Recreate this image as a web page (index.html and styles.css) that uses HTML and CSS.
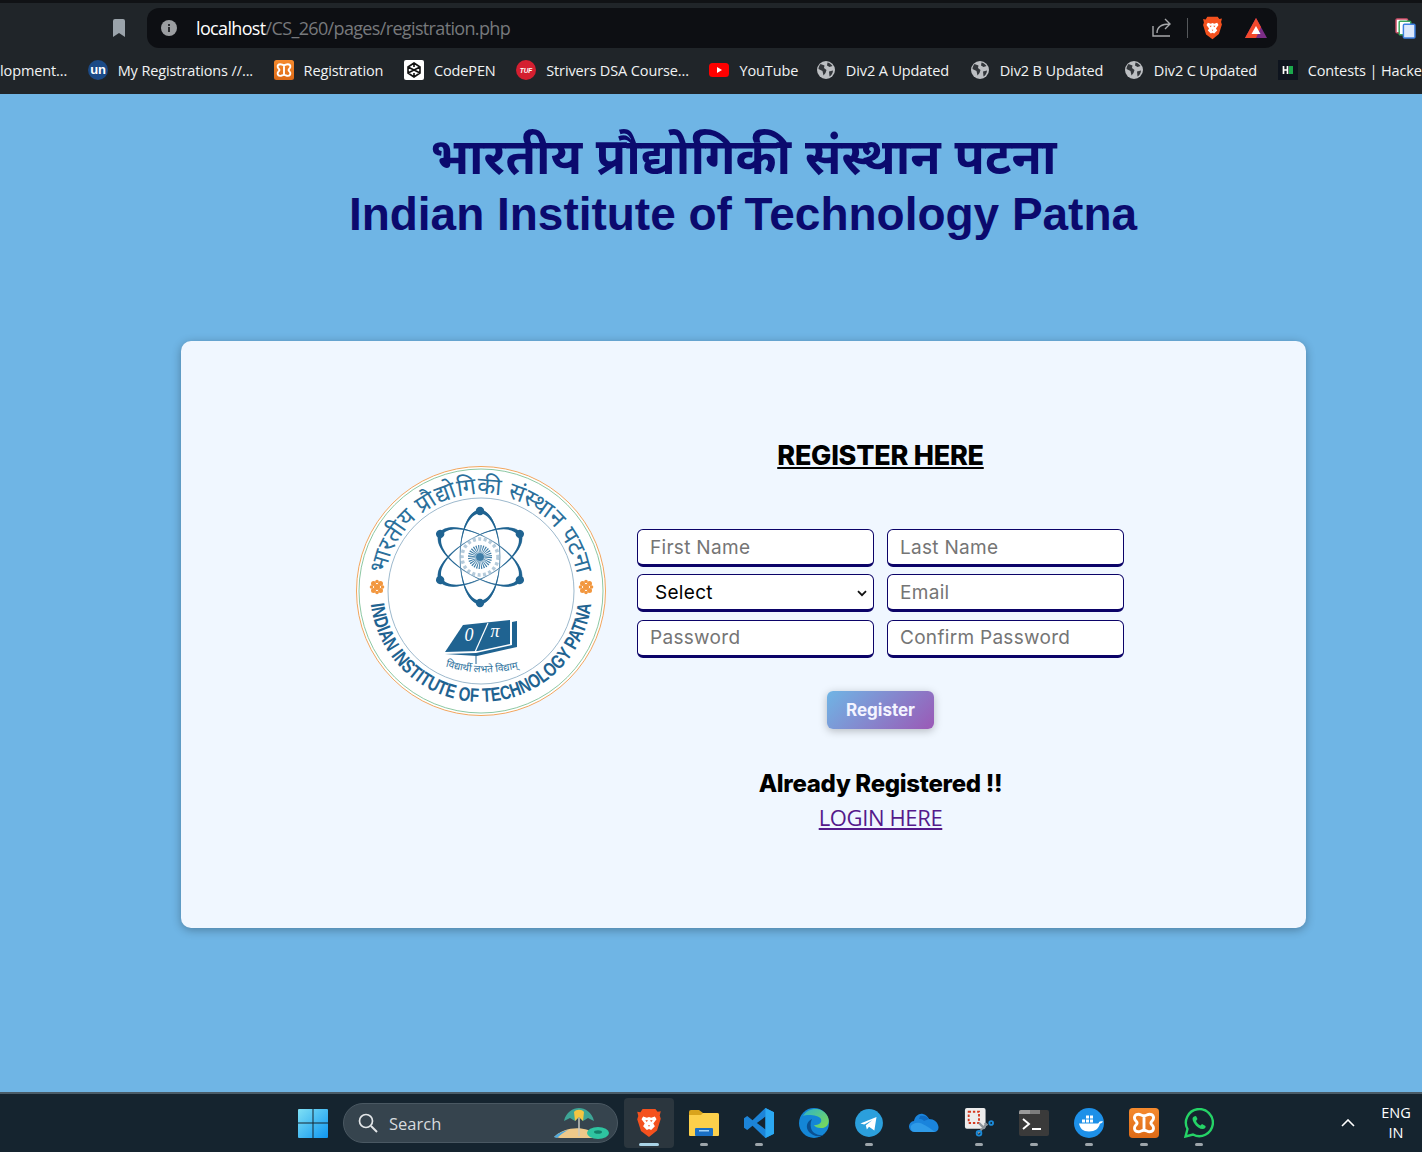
FILE: index.html
```html
<!DOCTYPE html>
<html lang="en">
<head>
<meta charset="utf-8">
<title>Registration</title>
<link rel="stylesheet" href="styles.css">
</head>
<body>
<svg class="defs" width="0" height="0" aria-hidden="true">
  <defs>
    <symbol id="globe" viewBox="0 0 20 20">
      <circle cx="10" cy="10" r="9" fill="#bcbfc2"/>
      <path d="M4.500 4 8.500 5.500 8 8 10.500 10 9.500 13 7.500 15.500 6.500 11 2.500 9C2.500 7 3.500 5 4.500 4ZM11.500 2.500C14 3 15.500 4.500 16.500 6L13.500 7 11 5.500ZM13 11.500 17 10.500C17 13 15.500 15.500 13.500 16.500Z" fill="#33373b"/>
    </symbol>
    <symbol id="xampp" viewBox="0 0 24 24">
      <defs><linearGradient id="xg" x1="0" y1="0" x2="0" y2="1"><stop offset="0" stop-color="#f58a2e"/><stop offset="1" stop-color="#dd6a16"/></linearGradient></defs>
      <rect width="24" height="24" rx="3" fill="url(#xg)"/>
      <path d="M7.500 5c2 0 2.500 1.200 4.500 1.200S14.500 5 16.500 5c2.500 0 3.500 1.800 3 3.700-.4 1.500-2 2-2 3.300s1.600 1.800 2 3.300c.5 1.900-.5 3.700-3 3.700-2 0-2.500-1.200-4.500-1.200S9.500 19 7.500 19c-2.500 0-3.500-1.800-3-3.700.4-1.500 2-2 2-3.300s-1.600-1.800-2-3.300C4 6.800 5 5 7.500 5ZM12 7v10" fill="none" stroke="#fff" stroke-width="2.300"/>
    </symbol>
    <symbol id="brave" viewBox="0 0 24 28">
      <path d="M6 1h12l2 2.500 3-.5-1 4 1 3-3.500 11L12 27l-7.500-5.500L1 10.500l1-3-1-4 3 .5Z" fill="#f4511e"/>
      <path d="M6.500 8 10 9l2-.7 2 .7 3.500-1 1.500 2.500-3 4 1.500 2.500-3.500 3.500-2-1-2 1-3.500-3.500 1.500-2.500-3-4Z" fill="#fff"/>
      <path d="M8.500 11.500h2.500l-1 1.500ZM15.500 11.500H13l1 1.500ZM11 16h2l-1 1.500Z" fill="#f4511e"/>
    </symbol>
  </defs>
</svg>

<header class="browser">
  <div class="toolbar">
    <svg class="bookmark-icon" viewBox="0 0 14 18"><path d="M1 2a2 2 0 0 1 2-2h8a2 2 0 0 1 2 2v16l-6-4-6 4Z" fill="#9aa3aa"/></svg>
    <div class="omnibox">
      <svg class="info-icon" viewBox="0 0 16 16"><circle cx="8" cy="8" r="8" fill="#9b9ea1"/><rect x="7" y="7" width="2" height="5" fill="#2a2c2f"/><rect x="7" y="4" width="2" height="2" fill="#2a2c2f"/></svg>
      <span class="url"><span class="url-host">localhost</span>/CS_260/pages/registration.php</span>
      <svg class="share-icon" viewBox="0 0 20 20"><path d="M1 8v10h17M5 15c0-6 4-9 13-9M13 1l5 5-5 5" fill="none" stroke="#a6a8ab" stroke-width="1.400"/></svg>
      <span class="omni-sep"></span>
      <svg class="brave-small" viewBox="0 0 24 28"><use href="#brave"/></svg>
      <svg class="bat-icon" viewBox="0 0 22 20"><path d="M11 0 22 20H0Z" fill="#7b2d86"/><path d="M11 0 16 9 11 20H0Z" fill="#f4492c"/><path d="M11 8l4.500 8h-9Z" fill="#fff"/></svg>
    </div>
    <svg class="tabs-icon" viewBox="0 0 20 20"><rect x="1" y="1" width="11" height="13" rx="1" fill="#fff" stroke="#d1506b" stroke-width="1.400"/><rect x="4" y="3" width="11" height="13" rx="1" fill="#fff" stroke="#3aa65c" stroke-width="1.400"/><rect x="8" y="6" width="11" height="13" rx="1" fill="#dce8fb" stroke="#3d7fe0" stroke-width="1.400"/></svg>
  </div>
  <nav class="bookmarks">
    <a class="bm bm-first"><span>lopment...</span></a>
    <a class="bm"><svg class="bm-ico" viewBox="0 0 20 20"><circle cx="10" cy="10" r="10" fill="#1b4a86"/><text x="10" y="14" class="un-text">un</text></svg><span>My Registrations //...</span></a>
    <a class="bm"><svg class="bm-ico" viewBox="0 0 24 24"><use href="#xampp"/></svg><span>Registration</span></a>
    <a class="bm"><svg class="bm-ico" viewBox="0 0 20 20"><rect width="20" height="20" rx="2" fill="#fff"/><path d="M10 3 16 7v6l-6 4-6-4V7ZM10 3v4M10 13v4M4 7l6 3 6-3M4 13l6-3 6 3" fill="none" stroke="#111" stroke-width="1.600"/></svg><span>CodePEN</span></a>
    <a class="bm"><svg class="bm-ico" viewBox="0 0 20 20"><circle cx="10" cy="10" r="10" fill="#d41f30"/><text x="10" y="12.500" class="tuf-text">TUF</text></svg><span>Strivers DSA Course...</span></a>
    <a class="bm bm-tight"><svg class="bm-ico" viewBox="0 0 20 20"><rect y="3" width="20" height="14" rx="3.500" fill="#f00"/><path d="M8 7l5 3-5 3Z" fill="#fff"/></svg><span>YouTube</span></a>
    <a class="bm"><svg class="bm-ico" viewBox="0 0 20 20"><use href="#globe"/></svg><span>Div2 A Updated</span></a>
    <a class="bm"><svg class="bm-ico" viewBox="0 0 20 20"><use href="#globe"/></svg><span>Div2 B Updated</span></a>
    <a class="bm"><svg class="bm-ico" viewBox="0 0 20 20"><use href="#globe"/></svg><span>Div2 C Updated</span></a>
    <a class="bm"><svg class="bm-ico" viewBox="0 0 20 20"><rect width="20" height="20" fill="#0e141e"/><path d="M5.500 6v8M9.500 6v8M5.500 10h4" stroke="#fff" stroke-width="1.700"/><rect x="11" y="6" width="4" height="8" fill="#1ba94c"/></svg><span>Contests | HackerRank</span></a>
  </nav>
</header>

<main class="page">
  <div class="titles">
    <h1 class="title-hi" lang="hi">भारतीय प्रौद्योगिकी संस्थान पटना</h1>
    <h1 class="title-en">Indian Institute of Technology Patna</h1>
  </div>

  <section class="card">
    <svg class="logo" viewBox="0 0 250 250" role="img" aria-label="IIT Patna logo">
      <defs>
        <path id="arc-top" d="M28 125a97 97 0 0 1 194 0"/>
        <path id="arc-bot" d="M14 125a111 111 0 0 0 222 0"/>
        <path id="arc-motto" d="M85 199Q125 213 167 201"/>
        <g id="orbit">
          <ellipse cx="124" cy="91" rx="20" ry="47" fill="none" stroke="#7fa5c0" stroke-width="1"/>
          <path d="M104 91C104 62 113 44 124 44S144 62 144 91C143 64 134 47.500 124 47.500S105 64 104 91Z" fill="#1f6391"/>
          <path d="M104 91C104 120 113 138 124 138S144 120 144 91C143 118 134 134.500 124 134.500S105 118 104 91Z" fill="#1f6391"/>
          <circle cx="124" cy="45" r="4.200" fill="#1f6391"/>
          <circle cx="124" cy="137" r="4.200" fill="#1f6391"/>
        </g>
        <g id="knot">
          <circle cx="-3.500" cy="-3.500" r="2.500"/><circle cx="3.500" cy="-3.500" r="2.500"/><circle cx="-3.500" cy="3.500" r="2.500"/><circle cx="3.500" cy="3.500" r="2.500"/><circle cx="0" cy="0" r="3"/><circle cx="0" cy="-5.500" r="1.800"/><circle cx="0" cy="5.500" r="1.800"/><circle cx="-5.500" cy="0" r="1.800"/><circle cx="5.500" cy="0" r="1.800"/>
        </g>
      </defs>
      <circle cx="125" cy="125" r="124.500" fill="#fff" stroke="#f2a65e" stroke-width="1"/>
      <circle cx="125" cy="125" r="122" fill="none" stroke="#6fb98c" stroke-width=".8"/>
      <circle cx="125" cy="125" r="93" fill="none" stroke="#9db9cd" stroke-width="1"/>
      <text class="logo-hi" lang="hi"><textPath href="#arc-top" startOffset="50%">भारतीय प्रौद्योगिकी संस्थान पटना</textPath></text>
      <text class="logo-en"><textPath href="#arc-bot" startOffset="50%" textLength="322" lengthAdjust="spacingAndGlyphs">INDIAN INSTITUTE OF TECHNOLOGY PATNA</textPath></text>
      <use href="#knot" x="21" y="121" fill="#f2973f"/>
      <use href="#knot" x="230" y="121" fill="#f2973f"/>
      <circle cx="124" cy="91" r="18" fill="none" stroke="#b5cbdb" stroke-width="3.500" stroke-dasharray="3 2.500"/>
      <use href="#orbit"/>
      <use href="#orbit" transform="rotate(60 124 91)"/>
      <use href="#orbit" transform="rotate(-60 124 91)"/>
      <circle cx="124" cy="91" r="8" fill="none" stroke="#3f7ea8" stroke-width="8" stroke-dasharray=".9 .9"/>
      <circle cx="124" cy="91" r="4" fill="#3f7ea8"/>
      <path d="M107 159 154 154V178L122 185 89 186Z" fill="#1f6391"/>
      <path d="M156 156 161 155V181L121 190 89 188 120 187 156 179Z" fill="#1f6391"/>
      <path d="M132 157 119 186" stroke="#fff" stroke-width="1.200"/>
      <path d="M120 187V198" stroke="#1f6391" stroke-width="1"/>
      <text class="book-sym" x="113" y="175">0</text>
      <text class="book-sym" x="139" y="171">π</text>
      <text class="logo-motto" lang="hi"><textPath href="#arc-motto" startOffset="50%">विद्यार्थी लभते विद्याम्</textPath></text>
    </svg>

    <div class="register">
      <h2 class="register-title">REGISTER HERE</h2>
      <form class="fields">
        <input class="field" type="text" placeholder="First Name">
        <input class="field" type="text" placeholder="Last Name">
        <div class="select-wrap">
          <select class="field field-select"><option>Select</option></select>
          <svg class="select-chev" viewBox="0 0 10 7"><path d="M1 1.200 5 5.200 9 1.200" fill="none" stroke="#111" stroke-width="1.800"/></svg>
        </div>
        <input class="field" type="email" placeholder="Email">
        <input class="field" type="password" placeholder="Password">
        <input class="field" type="password" placeholder="Confirm Password">
      </form>
      <button class="submit" type="button">Register</button>
      <p class="already">Already Registered !!</p>
      <a class="login-link" href="#">LOGIN HERE</a>
    </div>
  </section>
</main>

<footer class="taskbar">
  <svg class="win" viewBox="0 0 30 30"><defs><linearGradient id="wg" x1="0" y1="0" x2="1" y2="1"><stop offset="0" stop-color="#7fe0f5"/><stop offset="1" stop-color="#0f96f0"/></linearGradient></defs><path d="M1 1h13.500v13.500H0V2a1 1 0 0 1 1-1ZM15.500 1H29a1 1 0 0 1 1 1v12.500H15.500ZM0 15.500h14.500V30H1a1 1 0 0 1-1-1ZM15.500 15.500H30V29a1 1 0 0 1-1 1H15.500Z" fill="url(#wg)"/></svg>
  <div class="search">
    <svg class="search-ico" viewBox="0 0 20 20"><circle cx="8" cy="8" r="6.500" fill="none" stroke="#e3e6e8" stroke-width="1.700"/><path d="M13 13l6 6" stroke="#e3e6e8" stroke-width="1.900"/></svg>
    <span class="search-text">Search</span>
    <svg class="beach" viewBox="0 0 56 32"><path d="M0 30C8 22 22 19 34 23L42 31H6Z" fill="#eec98a"/><path d="M0 30C4 26 9 24 14 23 9 26 6 28 3 31Z" fill="#4fa8dc"/><path d="M25 4V29" stroke="#c9c9c0" stroke-width="1.500"/><path d="M10 14C12 5 19 1 25 1S38 5 40 14L34 11 29 14 25 10 21 14 16 11Z" fill="#3ea596"/><path d="M20 5C22 2 28 2 30 5L29 14 25 10 21 14Z" fill="#f4c542"/><ellipse cx="44" cy="26" rx="11" ry="6" fill="#2ec4a0"/><ellipse cx="44" cy="25" rx="4" ry="1.800" fill="#13806a"/></svg>
  </div>
  <div class="tb-apps">
    <div class="tb-app tb-active"><svg class="tb-ico" viewBox="0 0 24 28"><use href="#brave"/></svg><i class="dot dot-on"></i></div>
    <div class="tb-app"><svg class="tb-ico" viewBox="0 0 30 28"><path d="M0 3a2 2 0 0 1 2-2h8l4 3h14a2 2 0 0 1 2 2v4H0Z" fill="#d9a41c"/><path d="M0 6h12l2-2h14a2 2 0 0 1 2 2v20a1 1 0 0 1-1 1H1a1 1 0 0 1-1-1Z" fill="#fcd04b"/><rect x="6" y="19" width="18" height="8" rx="1" fill="#1a6fc4"/><rect x="10" y="21" width="10" height="1.500" fill="#9fd1f7"/></svg><i class="dot"></i></div>
    <div class="tb-app"><svg class="tb-ico" viewBox="0 0 28 28"><path fill-rule="evenodd" d="M20 0 28 4V24L20 28 8 16.500 3 20.500 0 18.500V9.500L3 7.500 8 11.500ZM20 8 12 14 20 20Z" fill="#1c84d8"/><path d="M20 0 28 4V24L20 28Z" fill="#2ba8f2"/></svg><i class="dot"></i></div>
    <div class="tb-app"><svg class="tb-ico" viewBox="0 0 30 30"><defs><linearGradient id="eg" x1="0" y1="0" x2="1" y2="1"><stop offset="0" stop-color="#2fb4c8"/><stop offset="1" stop-color="#7fdc4f"/></linearGradient></defs><circle cx="15" cy="15" r="15" fill="#1486d6"/><path d="M4 8C9-1 24-2 29 9c2 5 0 10-5 11-5 .5-8-1-9-3 6 0 8-3 7-6-2-4-14-5-18-3Z" fill="url(#eg)"/><path d="M13 11c-5 2-7 8-3 13 3 3 9 6 15 3-6 1-12-2-13-7-1-4 0-7 1-9Z" fill="#0b4f8f"/></svg></div>
    <div class="tb-app"><svg class="tb-ico" viewBox="0 0 28 28"><circle cx="14" cy="14" r="13" fill="#2b9fdc"/><path d="M6 14.500 21 8.500 19 21 14 17.500 12 20 11 16 17 11.500 9.500 15.500Z" fill="#fff"/></svg><i class="dot"></i></div>
    <div class="tb-app"><svg class="tb-ico" viewBox="0 0 30 20"><path d="M6 19a5.500 5.500 0 0 1-1-11C6 3 10 0 14 1c3 .5 5 3 6 5 5 0 9 3 9.500 8 .2 3-2 5-4 5Z" fill="#1a84dc"/><path d="M6 19c-3 0-5-3-4-6 1-2 5-4 9-3 4 1 11 6 15 9Z" fill="#2f9be8"/><path d="M11 3c3-1 7 0 9 3l-5 2c-2-2-3-2-5-2Z" fill="#0f6cc2"/></svg></div>
    <div class="tb-app"><svg class="tb-ico" viewBox="0 0 30 32"><rect width="22" height="22" rx="2" fill="#ececec"/><rect x="4" y="4" width="11" height="12" fill="none" stroke="#d5391f" stroke-width="2" stroke-dasharray="2.500 2"/><path d="M15 16 21 22M21 16 24 18.500" stroke="#8d959b" stroke-width="2.500"/><path d="M14 27 22 18" stroke="#8d959b" stroke-width="2"/><circle cx="15" cy="27" r="2.500" fill="none" stroke="#1b8ad8" stroke-width="2"/><circle cx="28" cy="16" r="2" fill="none" stroke="#1b8ad8" stroke-width="2"/></svg><i class="dot"></i></div>
    <div class="tb-app"><svg class="tb-ico" viewBox="0 0 30 26"><rect width="30" height="26" rx="2" fill="#3a3a3a"/><path d="M0 2a2 2 0 0 1 2-2h9v4H0Z" fill="#9b9b9b"/><rect x="11" width="10" height="4" fill="#7d7d7d"/><path d="M4 9l6 5-6 5" fill="none" stroke="#fff" stroke-width="1.900"/><rect x="13" y="18" width="9" height="2" fill="#fff"/></svg><i class="dot"></i></div>
    <div class="tb-app"><svg class="tb-ico" viewBox="0 0 30 30"><circle cx="15" cy="15" r="15" fill="#1d90e8"/><path d="M5 15.500h18c1 0 2-.5 2-1.500 1-1 3-1 4-.5-1 1.500-2 2-3 2-1 5-5 8-11 8-6 0-9-3-10-8Z" fill="#fff"/><path d="M8 11.500h3v3H8ZM12 11.500h3v3h-3ZM16 11.500h3v3h-3ZM12 7.500h3v3h-3ZM16 7.500h3v3h-3Z" fill="#fff"/></svg><i class="dot"></i></div>
    <div class="tb-app"><svg class="tb-ico" viewBox="0 0 24 24"><use href="#xampp"/></svg><i class="dot"></i></div>
    <div class="tb-app"><svg class="tb-ico" viewBox="0 0 30 30"><path d="M1.500 28.500 3.500 21A13.500 13.500 0 1 1 9 26.500Z" fill="none" stroke="#25d366" stroke-width="2.400"/><path d="M10 8.500c-2 1-2 3 0 6.500 2.500 4 6 6 8.500 6s3.500-2 3-3l-3.500-2-1.500 1.500c-2-1-3.500-2.500-4.500-4.500L13.500 11 12 8Z" fill="#25d366"/></svg><i class="dot"></i></div>
  </div>
  <div class="tray">
    <svg class="tray-chev" viewBox="0 0 14 8"><path d="M1 7l6-6 6 6" fill="none" stroke="#fff" stroke-width="1.600"/></svg>
    <div class="lang"><span>ENG</span><span>IN</span></div>
  </div>
</footer>
</body>
</html>
```

FILE: styles.css
```css
* { box-sizing: border-box; }
html, body { margin: 0; height: 100%; }
body {
  width: 1422px;
  height: 1152px;
  display: flex;
  flex-direction: column;
  overflow: hidden;
  font-family: "Open Sans", "Noto Sans", sans-serif;
  background: #6fb5e5;
}
.defs { display: block; height: 0; }

/* browser chrome */
.browser { flex: none; background: #202529; border-top: 3px solid #101215; color: #fff; }
.toolbar { height: 45px; display: flex; align-items: flex-end; position: relative; }
.bookmark-icon { width: 14px; height: 18px; margin: 0 21px 11px 112px; }
.omnibox {
  width: 1130px;
  height: 40px;
  display: flex;
  align-items: center;
  background: #0d0f13;
  border-radius: 12px;
  padding: 0 10px 0 14px;
}
.info-icon { width: 16px; height: 16px; margin-right: 19px; }
.url { flex: 1; font-size: 18px; letter-spacing: -.65px; color: #77797c; white-space: nowrap; font-family: "Open Sans", sans-serif; margin-top: -1px; }
.url-host { color: #fff; }
.share-icon { width: 20px; height: 20px; margin-right: 15px; }
.omni-sep { width: 1px; height: 20px; background: #55585b; margin-right: 14px; }
.brave-small { width: 21px; height: 24px; margin-right: 22px; }
.bat-icon { width: 22px; height: 20px; }
.tabs-icon { width: 21px; height: 21px; margin: 0 0 9px 118px; flex: none; }
.bookmarks { height: 46px; padding-bottom: 2px; display: flex; align-items: center; gap: 20.600px; overflow: hidden; white-space: nowrap; font-size: 14.500px; letter-spacing: -.12px; }
.bm { display: flex; align-items: center; gap: 10px; flex: none; color: #f1f3f4; }
.bm-tight { margin-right: -3px; }
.bm-ico { width: 20px; height: 20px; flex: none; }
.un-text { font: 700 13px "Liberation Sans", sans-serif; fill: #fff; text-anchor: middle; }
.tuf-text { font: italic 700 6.500px "Liberation Sans", sans-serif; fill: #fff; text-anchor: middle; }

/* page */
.page { flex: 1; padding: 31px 116px 0 181px; display: flex; flex-direction: column; align-items: center; min-height: 0; }
.titles { width: 100%; text-align: center; color: #0b0a6e; white-space: nowrap; font-family: "Liberation Sans", "Noto Sans", sans-serif; font-weight: 700; }
.title-hi { margin: 0; font-size: 49.500px; line-height: 64px; font-weight: 700; }
.title-en { margin: 0 1px 0 0; font-size: 46px; line-height: 50px; font-weight: 700; letter-spacing: -.02px; }
.card {
  width: 1125px;
  height: 587px;
  margin-top: 102px;
  flex: none;
  background: #f0f7ff;
  border-radius: 10px;
  box-shadow: 0 2px 10px rgba(0,0,0,.3);
  display: flex;
  align-items: flex-start;
  padding-left: 175px;
  gap: 31px;
}
.logo { width: 250px; height: 250px; margin-top: 125px; flex: none; }
.logo-hi { font: 400 23.500px "Noto Sans", "Liberation Sans", sans-serif; fill: #2a6f9b; text-anchor: middle; }
.logo-en { font: 700 19.500px "Liberation Sans", sans-serif; fill: #1f6391; text-anchor: middle; }
.logo-motto { font: 400 10px "Noto Sans", sans-serif; fill: #2a6f9b; text-anchor: middle; }
.book-sym { font: italic 18px "Liberation Serif", serif; fill: #fff; text-anchor: middle; }

.register { width: 487px; display: flex; flex-direction: column; align-items: center; padding-top: 97px; font-family: Inter, "Open Sans", sans-serif; }
.register-title { margin: 0; font-size: 27px; line-height: 36px; font-weight: 800; text-decoration: underline; color: #000; letter-spacing: -.25px; }
.fields { width: 100%; margin-top: 55px; display: grid; grid-template-columns: 237px 237px; column-gap: 13px; row-gap: 7.400px; }
.field {
  height: 38px;
  width: 100%;
  background: #fff;
  border: 1.500px solid #0b0368;
  border-bottom-width: 3px;
  border-radius: 6px;
  padding: 0 12px;
  font-family: Inter, sans-serif;
  font-size: 19px;
  letter-spacing: .3px;
  color: #000;
  outline: none;
}
.field::placeholder { color: #757575; opacity: 1; }
.select-wrap { position: relative; height: 38px; }
.field-select { padding-left: 17px; appearance: none; -webkit-appearance: none; }
.select-chev { position: absolute; right: 7px; top: 16px; width: 10px; height: 7px; pointer-events: none; }
.submit {
  margin-top: 33px;
  width: 107px;
  height: 38px;
  border: 0;
  border-radius: 6px;
  background: linear-gradient(135deg, #6fb5e5, #9b59b6);
  color: #f3f4ff;
  font: 700 17px Inter, sans-serif;
  box-shadow: 0 2px 8px rgba(0,0,0,.25);
}
.already { margin: 38px 0 0; font-size: 24px; line-height: 34px; font-weight: 800; color: #000; letter-spacing: -.3px; }
.login-link { font-family: "Open Sans", sans-serif; font-size: 22px; line-height: 32px; color: #551a8b; text-decoration: underline; letter-spacing: -.37px; }

/* taskbar */
.taskbar {
  flex: none;
  height: 60px;
  display: flex;
  align-items: center;
  background: #15242f;
  border-top: 2px solid #4a5c68;
  padding-left: 298px;
  color: #fff;
}
.win { width: 30px; height: 30px; flex: none; }
.search { width: 275px; height: 40px; margin-left: 15px; border-radius: 20px; background: #36444e; border: 1px solid #4a5862; display: flex; align-items: center; padding-left: 14px; flex: none; }
.search-ico { width: 20px; height: 20px; }
.search-text { margin-left: 11px; font-size: 16.500px; color: #d7dbde; }
.beach { width: 56px; height: 32px; margin-left: auto; margin-right: 7px; }
.tb-apps { display: flex; margin-left: 6px; flex: none; gap: 5px; }
.tb-app { width: 50px; height: 50px; display: flex; align-items: center; justify-content: center; position: relative; border-radius: 4px; }
.tb-active { background: #2b363e; }
.tb-ico { width: 30px; height: 30px; }
.dot { position: absolute; left: 50%; bottom: 2px; width: 8px; height: 3px; margin-left: -4px; border-radius: 2px; background: #9da5ab; }
.dot-on { width: 20px; margin-left: -10px; background: #a9d3e6; }
.tray { display: flex; align-items: center; margin-left: 117px; flex: none; }
.tray-chev { width: 14px; height: 8px; margin-right: 22px; }
.lang { display: flex; flex-direction: column; align-items: center; font-size: 14.500px; line-height: 20px; width: 38px; }
```
